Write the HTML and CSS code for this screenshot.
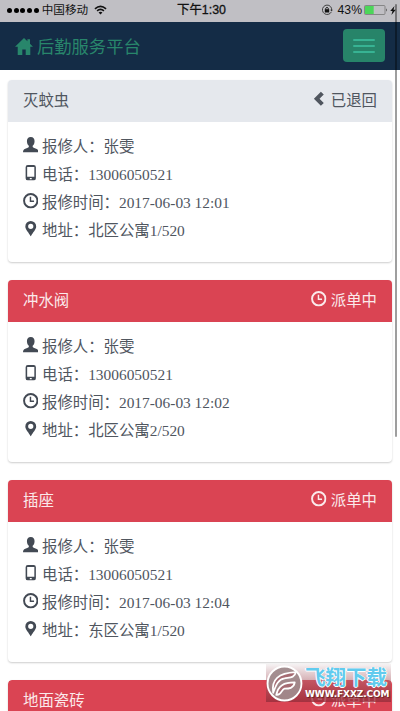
FILE: index.html
```html
<!DOCTYPE html>
<html lang="zh-CN">
<head>
<meta charset="utf-8">
<meta name="viewport" content="width=device-width, initial-scale=1">
<title>后勤服务平台</title>
<link rel="stylesheet" href="styles.css">
</head>
<body>
<svg class="defs" aria-hidden="true">
  <symbol id="user" viewBox="0 0 16 16"><path d="M8 0C5 0 3.900 2 4.100 4.800c.1 1.900.8 3.300 1.900 4.300v1.300c-.4.900-2.600 1.300-4.200 2C.6 13 .1 13.800 0 15.900h16c-.1-2.100-.6-2.900-1.800-3.500-1.600-.7-3.800-1.100-4.200-2V9.100c1.100-1 1.800-2.400 1.900-4.300C12.100 2 11 0 8 0z"/></symbol>
  <symbol id="phone" viewBox="0 0 16 16"><path fill-rule="evenodd" d="M5 0h6q2.300 0 2.300 2.300v11.400Q13.300 16 11 16H5q-2.300 0-2.300-2.300V2.300Q2.700 0 5 0zM4.300 2v10.200h7.400V2zM7 13.300v1.500h2v-1.500z"/></symbol>
  <symbol id="clock" viewBox="0 0 16 16"><circle cx="8" cy="8" r="6.900" fill="none" stroke="currentColor" stroke-width="2"/><path d="M7.700 3.800v4.700h3.700" fill="none" stroke="currentColor" stroke-width="1.500"/></symbol>
  <symbol id="pin" viewBox="0 0 16 16"><path fill-rule="evenodd" d="M8 0a5.600 5.600 0 0 0-5.600 5.600C2.400 9 6 11.500 8 16c2-4.500 5.600-7 5.600-10.400A5.600 5.600 0 0 0 8 0zm0 2.800a2.700 2.700 0 1 1 0 5.400 2.700 2.700 0 0 1 0-5.400z"/></symbol>
  <symbol id="left" viewBox="0 0 16 16"><path d="M10.200.8 13.200 3.600 8.800 8l4.400 4.400-3 2.800L3 8z"/></symbol>
</svg>

<div class="status">
  <div class="carrier">
    <span class="dots"><i></i><i></i><i></i><i></i><i></i></span>
    <span>中国移动</span>
    <svg class="wifi" viewBox="0 0 14 10"><g fill="none" stroke="#111" stroke-width="1.700"><path d="M1 3.700q6-5.200 12 0M3.300 6q3.700-3.200 7.400 0"/></g><path d="M4.900 7.600q2.100-1.500 4.200 0L7 9.800z" fill="#111"/></svg>
  </div>
  <div class="time">下午1:30</div>
  <div class="power">
    <svg class="lock" viewBox="0 0 12 12"><path d="M9.500 2.500A4.700 4.700 0 1 0 10.300 8M9.700 2.700A4.700 4.700 0 0 1 10.600 6" fill="none" stroke="#333" stroke-width=".9"/><path d="M9.200 5.700h2.700l-1.400 1.700z" fill="#333"/><path d="M3.800 5.200h4.400v3.300H3.800z" fill="#111"/><path d="M4.700 5.500V4.300q1.300-2 2.600 0v1.200" fill="none" stroke="#111" stroke-width=".9"/></svg>
    <span>43%</span>
    <svg class="battery" viewBox="0 0 24 10"><rect x=".5" y=".5" width="20.500" height="9" rx="1" fill="none" stroke="#777" stroke-width=".8"/><path d="M1 1h8.700v8H1z" fill="#4cd65a"/><path d="M22 3.300q1.600 1.700 0 3.400z" fill="#333"/></svg>
    <svg class="bolt" viewBox="0 0 6 9"><path d="M4.500 0 .2 5h2.300L1.400 9 5.800 3.700H3.500z" fill="#111"/></svg>
  </div>
</div>

<nav class="navbar">
  <a class="brand"><svg class="home" viewBox="0 0 18 17"><path d="M9 0 0 8.800h2.700V17h4.600v-5.500h3.400V17h4.600V8.800H18l-3-3V1.200h-2.600v2z"/></svg><span>后勤服务平台</span></a>
  <button class="toggle" aria-label="菜单"><i></i><i></i><i></i></button>
</nav>

<main class="list">
  <section class="card">
    <header class="head"><span>灭蚊虫</span><span class="state"><svg class="icon"><use href="#left"/></svg>已退回</span></header>
    <div class="body">
      <p><svg class="icon"><use href="#user"/></svg>报修人：张雯</p>
      <p><svg class="icon"><use href="#phone"/></svg>电话：13006050521</p>
      <p><svg class="icon"><use href="#clock"/></svg>报修时间：2017-06-03 12:01</p>
      <p><svg class="icon"><use href="#pin"/></svg>地址：北区公寓1/520</p>
    </div>
  </section>
  <section class="card danger">
    <header class="head"><span>冲水阀</span><span class="state"><svg class="icon"><use href="#clock"/></svg>派单中</span></header>
    <div class="body">
      <p><svg class="icon"><use href="#user"/></svg>报修人：张雯</p>
      <p><svg class="icon"><use href="#phone"/></svg>电话：13006050521</p>
      <p><svg class="icon"><use href="#clock"/></svg>报修时间：2017-06-03 12:02</p>
      <p><svg class="icon"><use href="#pin"/></svg>地址：北区公寓2/520</p>
    </div>
  </section>
  <section class="card danger">
    <header class="head"><span>插座</span><span class="state"><svg class="icon"><use href="#clock"/></svg>派单中</span></header>
    <div class="body">
      <p><svg class="icon"><use href="#user"/></svg>报修人：张雯</p>
      <p><svg class="icon"><use href="#phone"/></svg>电话：13006050521</p>
      <p><svg class="icon"><use href="#clock"/></svg>报修时间：2017-06-03 12:04</p>
      <p><svg class="icon"><use href="#pin"/></svg>地址：东区公寓1/520</p>
    </div>
  </section>
  <section class="card danger last">
    <header class="head"><span>地面瓷砖</span><span class="state"><svg class="icon"><use href="#clock"/></svg>派单中</span></header>
  </section>
</main>

<div class="scrollbar"></div>

<div class="watermark">
  <svg class="seal" viewBox="0 0 36 36"><circle cx="18" cy="18" r="16.500" fill="#a08a8c" fill-opacity=".95" stroke="#fff" stroke-width="1.800"/><path d="M7 27C5 14 12 8 29 7c-1 6-7 5-11 6-6 1-8 6-11 14z" fill="#a66c73" stroke="#fff" stroke-width="1.700" stroke-linejoin="round"/><path d="M10 29c2-9 7-12 18-12-1 6-6 6-10 6-3 .5-3 7-8 6z" fill="#a66c73" stroke="#fff" stroke-width="1.700" stroke-linejoin="round"/></svg>
  <div class="words"><span class="name">飞翔下载</span><span class="site">WWW.FXXZ.COM</span></div>
</div>
</body>
</html>
```

FILE: styles.css
```css
* { box-sizing: border-box; }

body {
  position: relative;
  display: flex;
  flex-direction: column;
  height: 711px;
  margin: 0;
  overflow: hidden;
  background: #fff;
  color: #50565f;
  font: 15.4px/28px "Liberation Serif", "Noto Sans CJK SC", serif;
}

.defs { position: absolute; width: 0; height: 0; }
svg { flex: none; }

.status {
  display: grid;
  flex: none;
  grid-template-columns: 1fr auto 1fr;
  align-items: center;
  height: 22px;
  padding: 0 4px 2px 7px;
  background: #c0bfc4;
  color: #111;
  font: 12px/20px "Liberation Sans", "Noto Sans CJK SC", sans-serif;
}
.carrier, .power { display: flex; align-items: center; }
.carrier { font-size: 11.6px; }
.dots { display: flex; gap: 1.7px; margin-right: 3px; }
.dots i { width: 5px; height: 5px; border-radius: 50%; background: #000; }
.wifi { width: 13px; height: 10px; margin-left: 6px; }
.time { font-size: 12.4px; -webkit-text-stroke: .3px #111; }
.power { justify-content: flex-end; }
.lock { width: 12px; height: 12px; margin-right: 5px; }
.battery { width: 24px; height: 10px; margin-left: 2px; }
.bolt { width: 6px; height: 9px; margin-left: 2px; }
.power { font-size: 12.2px; }

.navbar {
  display: flex;
  flex: none;
  align-items: center;
  justify-content: space-between;
  height: 48px;
  padding: 0 15px;
  background: #142c46;
}
.brand {
  display: flex;
  align-items: center;
  gap: 4px;
  color: #28866b;
  font-size: 17.3px;
}
.brand span { padding-top: 4px; }
.home { width: 18px; height: 17px; fill: currentColor; }
.toggle {
  display: flex;
  flex-direction: column;
  align-items: center;
  justify-content: center;
  gap: 4px;
  width: 42px;
  height: 33px;
  margin-top: -1px;
  padding: 0;
  border: 0;
  border-radius: 4px;
  background: #278469;
}
.toggle i { width: 22px; height: 2px; border-radius: 1px; background: #37b393; }

.list {
  display: flex;
  flex: 1;
  flex-direction: column;
  gap: 18px;
  min-height: 0;
  padding: 10px 8px 0;
}
.card {
  flex: none;
  height: 182px;
  border-radius: 4px;
  background: #fff;
  box-shadow: 0 1px 2px rgba(0, 0, 0, .2);
}
.last { height: 31px; overflow: hidden; border-radius: 4px 4px 0 0; }
.head {
  display: flex;
  justify-content: space-between;
  align-items: center;
  height: 42px;
  padding: 0 15px;
  border-radius: 4px 4px 0 0;
  background: #e5e8ed;
}
.danger .head { background: #da4453; color: #fbe9eb; }
.state, .body p { display: flex; align-items: center; gap: 4px; }
.icon { width: 15.5px; height: 15.5px; fill: currentColor; }
.body { padding: 11px 14.5px; }
.body p { height: 28px; margin: 0; }
.body .icon { margin-top: -4px; color: #434a54; }
.head .icon { margin-top: -4px; }

.scrollbar {
  position: absolute;
  top: 4px;
  left: 394.5px;
  width: 2.5px;
  height: 433px;
  border-radius: 2px;
  background: rgba(0, 0, 0, .38);
}

.watermark {
  position: absolute;
  top: 664px;
  left: 266px;
  display: flex;
  align-items: center;
  width: 125px;
  height: 38px;
  background: linear-gradient(rgba(225, 215, 217, .3), rgba(150, 45, 58, .8));
}
.seal { width: 37px; height: 37px; }
.words { display: flex; flex-direction: column; align-items: flex-start; }
.name {
  margin-left: 2px;
  color: #62cbee;
  font: bold 20.5px/23px "Noto Sans CJK SC", sans-serif;
  text-shadow: 1px 0 #fff, -1px 0 #fff, 0 1px #fff;
}
.site {
  margin-left: 2px;
  color: #fff;
  font: bold 9px/13px "DejaVu Sans", sans-serif;
  letter-spacing: -.1px;
  white-space: nowrap;
  text-shadow: 1px 1px 1px #622;
}
```
